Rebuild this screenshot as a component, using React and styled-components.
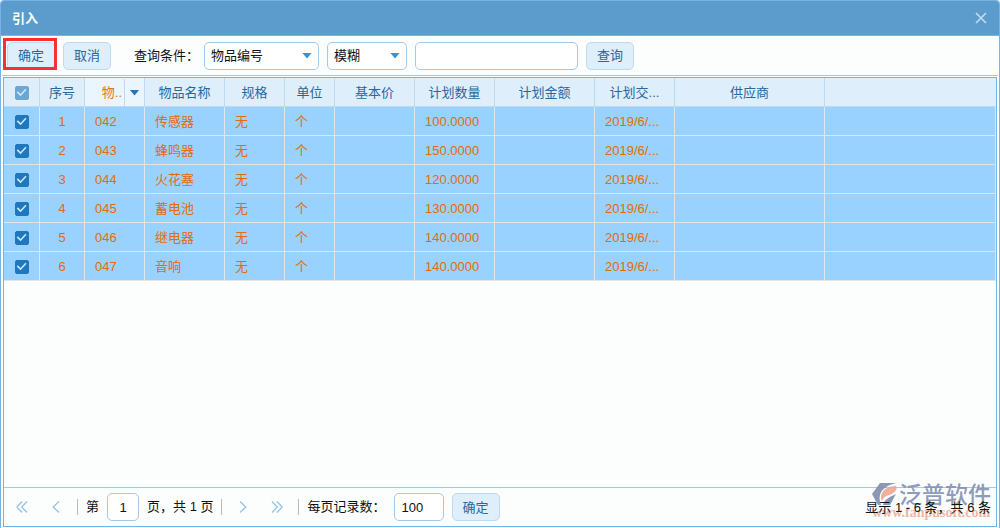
import React, { useState } from "react";
import styled, { createGlobalStyle } from "styled-components";

const columns = [
  { key: "check", width: 36 },
  { key: "no", title: "序号", width: 45 },
  { key: "code", title: "物..", width: 60 },
  { key: "name", title: "物品名称", width: 80 },
  { key: "spec", title: "规格", width: 60 },
  { key: "unit", title: "单位", width: 50 },
  { key: "price", title: "基本价", width: 80 },
  { key: "amount", title: "计划数量", width: 80 },
  { key: "total", title: "计划金额", width: 100 },
  { key: "date", title: "计划交...", width: 80 },
  { key: "supplier", title: "供应商", width: 150 },
  { key: "rest", title: "" },
];

const makeRow = (no, code, name, amount) => ({
  no,
  code,
  name,
  spec: "无",
  unit: "个",
  amount,
  date: "2019/6/...",
});

const rows = [
  makeRow(1, "042", "传感器", "100.0000"),
  makeRow(2, "043", "蜂鸣器", "150.0000"),
  makeRow(3, "044", "火花塞", "120.0000"),
  makeRow(4, "045", "蓄电池", "130.0000"),
  makeRow(5, "046", "继电器", "140.0000"),
  makeRow(6, "047", "音响", "140.0000"),
];

const Chevron = ({ double, flip }) => (
  <svg
    width="12"
    height="12"
    viewBox="0 0 12 12"
    fill="none"
    stroke="#93c3ea"
    strokeWidth="1.3"
    transform={flip ? "scale(-1 1)" : undefined}
    aria-hidden="true"
  >
    {double ? (
      <path d="M6 0.5 L0.8 6 L6 11.5 M11 0.5 L5.8 6 L11 11.5" />
    ) : (
      <path d="M9 0.5 L3.2 6 L9 11.5" />
    )}
  </svg>
);

const Dropdown = ({ label, width, options }) => (
  <SelectBox $width={width}>
    <select aria-label={label}>
      {options.map((option) => (
        <option key={option}>{option}</option>
      ))}
    </select>
    <Arrow aria-hidden="true" />
  </SelectBox>
);

const Logo = () => (
  <svg width="27" height="24" viewBox="0 0 27 24" aria-hidden="true">
    <path
      d="M8 0 H24 C15 2 9 7 8 12 C7 16 8 19 9 22 H6 L0 11 Z"
      fill="#7f8fb0"
    />
    <path
      d="M9 13 C10 7 16 3 24 3 C26 6 23 10 17 12 C13 13 11 15 10 18 C9 16 9 15 9 13 Z"
      fill="#eda791"
    />
    <path d="M11 22 C12 17 17 14 24 11 L18 22 Z" fill="#7f8fb0" />
  </svg>
);

const App = () => {
  const [selected, setSelected] = useState(rows.map((row) => row.no));
  const allSelected = selected.length === rows.length;

  const toggle = (no) =>
    setSelected(
      selected.includes(no)
        ? selected.filter((item) => item !== no)
        : [...selected, no]
    );

  return (
    <>
      <GlobalStyle />
      <Dialog>
        <TitleBar>
          <h1>引入</h1>
          <CloseBtn aria-label="关闭">
            <svg width="12" height="12" viewBox="0 0 12 12" stroke="#c3dcf0" strokeWidth="1.6">
              <path d="M1 1 L11 11 M11 1 L1 11" />
            </svg>
          </CloseBtn>
        </TitleBar>
        <Toolbar>
          <Marked>
            <Button>确定</Button>
          </Marked>
          <Button>取消</Button>
          <ToolLabel htmlFor="keyword">查询条件：</ToolLabel>
          <Dropdown label="查询字段" width={115} options={["物品编号", "物品名称"]} />
          <Dropdown label="匹配方式" width={80} options={["模糊", "精确"]} />
          <TextInput id="keyword" $width={163} />
          <Button>查询</Button>
        </Toolbar>
        <Grid>
          <TableArea>
            <Table>
              <colgroup>
                {columns.map((col) => (
                  <col key={col.key} width={col.width} />
                ))}
              </colgroup>
              <thead>
                <tr>
                  {columns.map((col) => (
                    <HeadCell key={col.key} $active={col.key === "code"}>
                      {col.key === "check" && (
                        <Check
                          $pale
                          aria-label="全选"
                          checked={allSelected}
                          onChange={() =>
                            setSelected(allSelected ? [] : rows.map((row) => row.no))
                          }
                        />
                      )}
                      {col.key === "code" ? (
                        <SortHead>
                          <span>{col.title}</span>
                          <button aria-label="列菜单">
                            <Arrow $dark />
                          </button>
                        </SortHead>
                      ) : (
                        col.title
                      )}
                    </HeadCell>
                  ))}
                </tr>
              </thead>
              <tbody>
                {rows.map((row) => (
                  <Row key={row.no} $selected={selected.includes(row.no)}>
                    {columns.map((col) => (
                      <Cell
                        key={col.key}
                        $center={col.key === "check" || col.key === "no"}
                      >
                        {col.key === "check" ? (
                          <Check
                            aria-label={`选择 ${row.name}`}
                            checked={selected.includes(row.no)}
                            onChange={() => toggle(row.no)}
                          />
                        ) : (
                          row[col.key]
                        )}
                      </Cell>
                    ))}
                  </Row>
                ))}
              </tbody>
            </Table>
          </TableArea>
          <Pager>
            <PageBtn aria-label="首页">
              <Chevron double />
            </PageBtn>
            <PageBtn aria-label="上一页">
              <Chevron />
            </PageBtn>
            <Divider />
            <label htmlFor="page">第</label>
            <TextInput id="page" $width={32} $center defaultValue="1" />
            <span>页，共 1 页</span>
            <Divider />
            <PageBtn aria-label="下一页">
              <Chevron flip />
            </PageBtn>
            <PageBtn aria-label="末页">
              <Chevron double flip />
            </PageBtn>
            <Divider />
            <label htmlFor="size">每页记录数：</label>
            <TextInput id="size" $width={50} defaultValue="100" />
            <Button>确定</Button>
            <Watermark>
              <div>
                <Logo />
                <strong>泛普软件</strong>
              </div>
              <small>www.fanpusoft.com</small>
            </Watermark>
            <Summary>显示 1 - 6 条，共 6 条</Summary>
          </Pager>
        </Grid>
      </Dialog>
    </>
  );
};

const GlobalStyle = createGlobalStyle`
  * {
    box-sizing: border-box;
  }
  body {
    margin: 0;
    background: #fff;
  }
  body, button, input, select {
    font-family: "Liberation Sans", "Noto Sans CJK SC", sans-serif;
    font-size: 13px;
    line-height: 18px;
  }
  button {
    cursor: pointer;
  }
`;

const Dialog = styled.main`
  display: flex;
  flex-direction: column;
  min-height: 100vh;
  border: 1px solid #74b3e4;
  border-bottom: 0;
  border-radius: 4px 4px 0 0;
  overflow: hidden;
  background: #fcfefe;
  color: #111;
`;

const TitleBar = styled.header`
  display: flex;
  align-items: center;
  justify-content: space-between;
  height: 35px;
  padding: 0 12px 0 11px;
  background: #5c9ccd;
  border-bottom: 1px solid #74b3e4;
  h1 {
    margin: 0;
    padding-top: 1px;
    font-size: 13px;
    color: #fff;
  }
`;

const CloseBtn = styled.button`
  display: flex;
  padding: 0;
  border: 0;
  background: none;
`;

const Toolbar = styled.div`
  display: flex;
  align-items: center;
  gap: 8px;
  height: 40px;
  margin: 0 1px;
  padding: 0 5px;
  border-bottom: 1px solid #a5c6e0;
`;

const Button = styled.button`
  width: 48px;
  height: 28px;
  padding: 1px 0 0;
  border: 1px solid #c0d9ed;
  border-radius: 5px;
  background: #dfeefb;
  color: #2468a0;
`;

const Marked = styled.div`
  position: relative;
  display: flex;
  &::after {
    content: "";
    position: absolute;
    inset: -4px -2px 0 -4px;
    border: 3px solid #f73131;
    pointer-events: none;
  }
`;

const ToolLabel = styled.label`
  width: 62px;
  margin-left: 15px;
  padding-top: 1px;
  white-space: nowrap;
`;

const SelectBox = styled.span`
  display: grid;
  grid-template-columns: 1fr 17px;
  align-items: center;
  width: ${(props) => props.$width}px;
  select {
    grid-area: 1 / 1 / 2 / 3;
    width: 100%;
    height: 28px;
    padding: 1px 6px 0;
    border: 1px solid #a4c9e6;
    border-radius: 5px;
    background: #fff;
    color: #111;
    appearance: none;
  }
  > i {
    grid-area: 1 / 2;
  }
`;

const Arrow = styled.i`
  display: block;
  width: 10px;
  height: 6px;
  background: ${(props) => (props.$dark ? "#1f78be" : "#3892d8")};
  clip-path: polygon(0 0, 100% 0, 50% 100%);
  pointer-events: none;
`;

const TextInput = styled.input`
  width: ${(props) => props.$width}px;
  height: 28px;
  padding: 0 7px;
  border: 1px solid #a4c9e6;
  border-radius: 5px;
  background: #fff;
  color: #111;
  text-align: ${(props) => (props.$center ? "center" : "left")};
`;

const Grid = styled.section`
  display: flex;
  flex: 1;
  flex-direction: column;
  margin: 1px 2px;
  border: 1px solid #74b3e4;
`;

const TableArea = styled.div`
  flex: 1;
`;

const Table = styled.table`
  width: 100%;
  table-layout: fixed;
  border-collapse: separate;
  border-spacing: 0;
`;

const HeadCell = styled.th`
  height: 29px;
  padding: 1px 0 0;
  border-right: 1px solid #c0daed;
  border-bottom: 1px solid #c0daed;
  background: ${(props) => (props.$active ? "#eaf5fe" : "#dfeefb")};
  color: #2468a0;
  font-weight: normal;
  white-space: nowrap;
  &:last-child {
    border-right: 0;
  }
`;

const SortHead = styled.div`
  display: grid;
  grid-template-columns: 1fr 20px;
  height: 27px;
  align-items: center;
  color: #e87310;
  text-align: right;
  span {
    padding-right: 2px;
  }
  button {
    display: grid;
    place-items: center;
    height: 27px;
    padding: 0;
    border: 0;
    border-left: 1px solid #c0daed;
    background: none;
  }
`;

const Row = styled.tr`
  background: ${(props) => (props.$selected ? "#99d2fe" : "#fff")};
`;

const Cell = styled.td`
  height: 29px;
  padding: 1px 0 0 ${(props) => (props.$center ? 0 : 10)}px;
  border-right: 1px solid #e3e6e8;
  border-bottom: 1px solid #e3e6e8;
  color: #e46c0a;
  text-align: ${(props) => (props.$center ? "center" : "left")};
  white-space: nowrap;
`;

const Check = styled.input.attrs({ type: "checkbox" })`
  display: block;
  width: 14px;
  height: 14px;
  margin: 0 auto;
  appearance: none;
  border: 1px solid #1f78be;
  border-radius: 2px;
  opacity: ${(props) => (props.$pale ? 0.6 : 1)};
  &:checked {
    display: grid;
    place-items: center;
    background: #1f78be;
  }
  &:checked::after {
    content: "";
    width: 12px;
    height: 12px;
    background: #c9e6fb;
    clip-path: polygon(10% 50%, 20% 40%, 42% 62%, 82% 18%, 92% 28%, 42% 82%);
  }
`;

const Pager = styled.footer`
  position: relative;
  display: flex;
  align-items: center;
  gap: 8px;
  height: 39px;
  padding: 0 5px;
  border-top: 1px solid #a4c9e6;
  white-space: nowrap;
`;

const PageBtn = styled.button`
  display: grid;
  place-items: center;
  width: 26px;
  height: 26px;
  padding: 0;
  border: 0;
  background: none;
`;

const Divider = styled.span`
  width: 1px;
  height: 16px;
  background: #b5b9bb;
`;

const Summary = styled.span`
  position: relative;
  margin-left: auto;
  padding-top: 1px;
`;

const Watermark = styled.div`
  position: absolute;
  right: 5px;
  bottom: 7px;
  opacity: 0.9;
  pointer-events: none;
  div {
    display: flex;
    align-items: center;
    height: 24px;
  }
  strong {
    color: #8391b4;
    font-size: 23px;
    font-weight: 500;
    line-height: 24px;
  }
  small {
    display: block;
    color: #efb09b;
    font: bold 14px/12px "Liberation Serif", serif;
  }
`;

export default App;
